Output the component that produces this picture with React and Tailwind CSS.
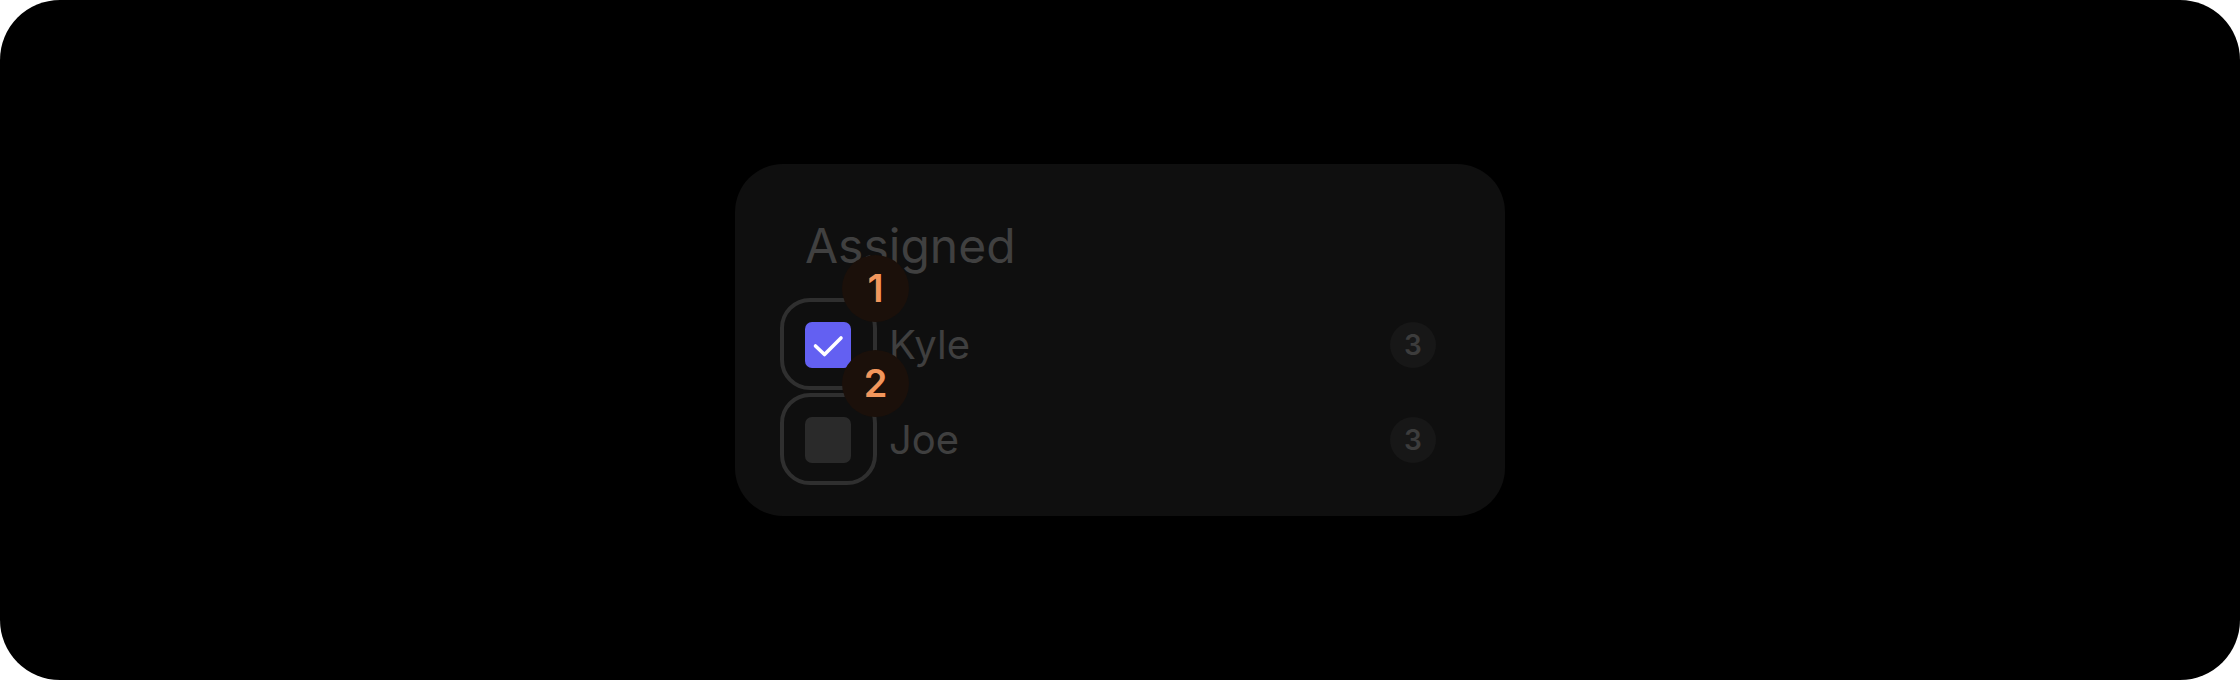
import React from 'react'

const PEOPLE = [
  { name: 'Kyle', count: 3, checked: true, order: 1 },
  { name: 'Joe', count: 3, checked: false, order: 2 },
]

function CheckIcon() {
  return (
    <svg className="w-[46px] h-[46px]" viewBox="0 0 46 46" fill="none">
      <path d="M10.5 24 L19.5 32.5 L36 16" stroke="#ffffff" strokeWidth={3.6}
        strokeLinecap="round" strokeLinejoin="round" />
    </svg>
  )
}

function PersonRow({ person }) {
  return (
    <div className="flex items-center h-[95px]">
      <div className="relative w-[46px] h-[46px] shrink-0">
        {/* Checkbox */}
        <div className={`w-[46px] h-[46px] rounded-[7px] ${person.checked ? 'bg-[#6360f2]' : 'bg-[#2a2a2a]'}`}>
          {person.checked && <CheckIcon />}
        </div>

        {/* Focus outline */}
        <div className="absolute top-[-24px] bottom-[-22px] left-[-25px] right-[-26px] rounded-[30px] border-[4px] border-[#2f2f2f] pointer-events-none" />

        {/* Tab order badge */}
        <div className="absolute top-[-67px] left-[37px] z-10 w-[67px] h-[67px] rounded-full bg-[#1b100a] flex items-center justify-center text-[38px] font-semibold leading-none text-[#f2965c]">
          {person.order}
        </div>
      </div>

      <span className="ml-[38px] text-[40px] leading-none text-[#3f3f3f]">{person.name}</span>

      <span className="ml-auto w-[46px] h-[46px] rounded-full bg-[#171717] flex items-center justify-center text-[28px] font-semibold leading-none text-[#3c3c3c]">
        {person.count}
      </span>
    </div>
  )
}

export default function App() {
  return (
    <div className="w-[2240px] h-[680px] bg-white" style={{ fontFamily: 'Inter, "Noto Sans", sans-serif' }}>
      <div className="h-full rounded-[60px] bg-black flex items-center justify-center">
        <div className="w-[770px] h-[352px] rounded-[48px] bg-[#0f0f0f] pl-[70px] pr-[69px] pt-[58px] flex flex-col">
          <h2 className="text-[48px] leading-[48px] text-[#404040]">Assigned</h2>
          <div className="mt-[27px] flex flex-col">
            {PEOPLE.map((p) => (
              <PersonRow key={p.name} person={p} />
            ))}
          </div>
        </div>
      </div>
    </div>
  )
}
